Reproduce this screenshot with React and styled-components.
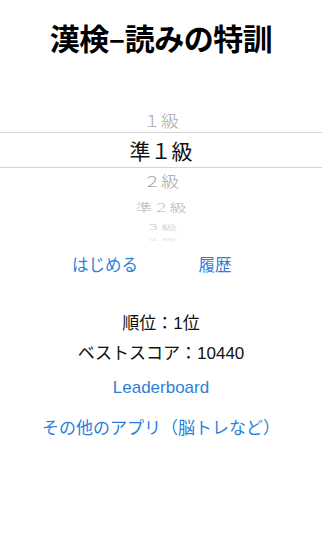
import React, { useState } from 'react';
import styled, { createGlobalStyle } from 'styled-components';

const GlobalStyle = createGlobalStyle`
  html, body {
    margin: 0;
    padding: 0;
    background: #ffffff;
  }
  body {
    font-family: "Liberation Sans", "Noto Sans CJK JP", sans-serif;
    -webkit-font-smoothing: antialiased;
  }
`;

// Rows of the wheel, drawn flatter and paler away from the selection
const grades = [
  { label: '１級', height: 25, size: 18, squash: 0.88, color: '#a9a9a9' },
  { label: '準１級', height: 36, size: 21, squash: 1, color: '#111111' },
  { label: '２級', height: 26, size: 18, squash: 0.8, color: '#a4a4a4' },
  { label: '準２級', height: 24, size: 17, squash: 0.68, color: '#b4b4b4' },
  { label: '３級', height: 17, size: 16, squash: 0.45, color: '#c6c6c6' },
  { label: '４級', height: 9, size: 16, squash: 0.18, color: '#dedede' },
];

const App = () => {
  const [selected] = useState(1);

  return (
    <>
      <GlobalStyle />
      <Page>
        <Title>漢検–読みの特訓</Title>

        <Picker>
          {grades.map((grade, index) => (
            <PickerRow
              key={grade.label}
              $height={grade.height}
              $selected={index === selected}
            >
              <PickerLabel
                $size={grade.size}
                $squash={grade.squash}
                $color={grade.color}
                $light={index !== selected}
              >
                {grade.label}
              </PickerLabel>
            </PickerRow>
          ))}
        </Picker>

        <ButtonRow>
          <LinkButton type="button">はじめる</LinkButton>
          <LinkButton type="button">履歴</LinkButton>
        </ButtonRow>

        <InfoLine $top={35}>順位：1位</InfoLine>
        <InfoLine>ベストスコア：10440</InfoLine>
        <LinkLine type="button" $top={4}>
          Leaderboard
        </LinkLine>
        <LinkLine type="button" $top={11}>
          その他のアプリ（脳トレなど）
        </LinkLine>
      </Page>
    </>
  );
};

// Styled components
const Page = styled.div`
  width: 322px;
  min-height: 551px;
  display: flex;
  flex-direction: column;
  align-items: center;
  box-sizing: border-box;
  padding-top: 22px;
`;

const Title = styled.h1`
  margin: 0;
  font-family: "Noto Sans CJK JP", sans-serif;
  font-size: 30px;
  line-height: 30px;
  font-weight: 700;
  color: #000000;
  letter-spacing: -0.5px;
`;

const Picker = styled.div`
  width: 100%;
  margin-top: 55px;
  display: flex;
  flex-direction: column;
`;

const PickerRow = styled.div`
  height: ${(p) => p.$height}px;
  display: flex;
  align-items: center;
  justify-content: center;
  overflow: hidden;
  border-top: ${(p) => (p.$selected ? '1px solid #d4d4d4' : 'none')};
  border-bottom: ${(p) => (p.$selected ? '1px solid #d4d4d4' : 'none')};
  box-sizing: border-box;
`;

const PickerLabel = styled.span`
  font-family: "Noto Sans CJK JP", sans-serif;
  font-size: ${(p) => p.$size}px;
  font-weight: ${(p) => (p.$light ? 300 : 400)};
  line-height: 1;
  color: ${(p) => p.$color};
  transform: scaleY(${(p) => p.$squash});
  white-space: nowrap;
`;

const ButtonRow = styled.div`
  margin-top: 10px;
  display: grid;
  grid-template-columns: 110px 110px;
  margin-right: 2px;
`;

const LinkButton = styled.button`
  border: none;
  background: none;
  padding: 0;
  font-family: "Noto Sans CJK JP", sans-serif;
  font-size: 16.5px;
  line-height: 20px;
  color: #2b7fdc;
  cursor: pointer;
`;

const InfoLine = styled.p`
  margin: ${(p) => p.$top || 0}px 0 0;
  font-size: 17px;
  line-height: 30px;
  color: #111111;
`;

const LinkLine = styled.button`
  margin-top: ${(p) => p.$top || 0}px;
  border: none;
  background: none;
  padding: 0;
  font-family: "Liberation Sans", "Noto Sans CJK JP", sans-serif;
  font-size: 17px;
  line-height: 30px;
  color: #2b7fdc;
  cursor: pointer;
`;

export default App;
